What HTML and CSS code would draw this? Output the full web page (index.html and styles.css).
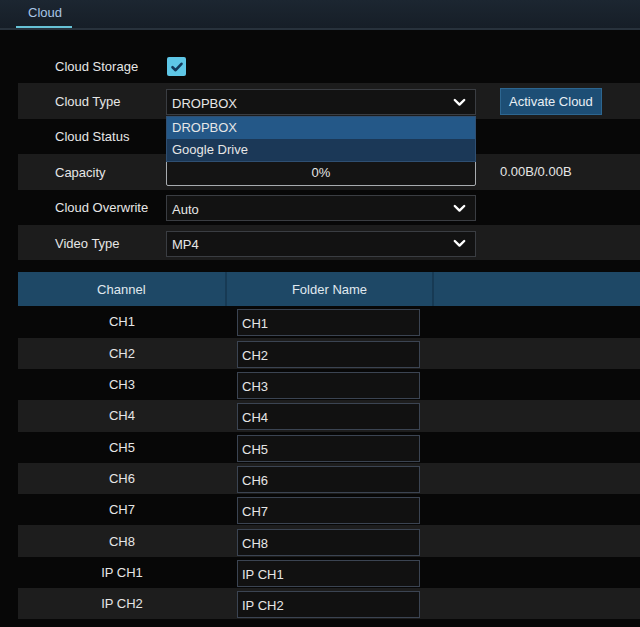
FILE: index.html
```html
<!DOCTYPE html>
<html lang="en">
<head>
  <meta charset="UTF-8">
  <meta name="viewport" content="width=device-width, initial-scale=1.0">
  <title>Cloud</title>
  <link rel="stylesheet" href="styles.css">
</head>
<body>
<div class="topbar">
  <div class="tab active">Cloud</div>
</div>

<div class="content">
  <div class="form">
    <div class="row">
      <div class="label">Cloud Storage</div>
      <div class="ctrl">
        <span class="checkbox">
          <svg width="14" height="14" viewBox="0 0 14 14"><path d="M2.5 7.2 L5.6 10.2 L11.5 3.8" fill="none" stroke="#12385a" stroke-width="2.6" stroke-linecap="round" stroke-linejoin="round"/></svg>
        </span>
      </div>
    </div>
    <div class="row">
      <div class="label">Cloud Type</div>
      <div class="ctrl">
        <div class="select open">
          <span>DROPBOX</span>
          <svg class="chev" width="13" height="9" viewBox="0 0 13 9"><path d="M1.8 2 L6.5 6.6 L11.2 2" fill="none" stroke="#fff" stroke-width="2.4" stroke-linecap="round" stroke-linejoin="round"/></svg>
          <ul class="dropdown">
            <li class="selected">DROPBOX</li>
            <li>Google Drive</li>
          </ul>
        </div>
      </div>
      <div class="extra"><button class="btn">Activate Cloud</button></div>
    </div>
    <div class="row">
      <div class="label">Cloud Status</div>
      <div class="ctrl"></div>
    </div>
    <div class="row">
      <div class="label">Capacity</div>
      <div class="ctrl">
        <div class="progress"><span>0%</span></div>
      </div>
      <div class="extra">0.00B/0.00B</div>
    </div>
    <div class="row">
      <div class="label">Cloud Overwrite</div>
      <div class="ctrl">
        <div class="select">
          <span>Auto</span>
          <svg class="chev" width="13" height="9" viewBox="0 0 13 9"><path d="M1.8 2 L6.5 6.6 L11.2 2" fill="none" stroke="#fff" stroke-width="2.4" stroke-linecap="round" stroke-linejoin="round"/></svg>
        </div>
      </div>
    </div>
    <div class="row">
      <div class="label">Video Type</div>
      <div class="ctrl">
        <div class="select">
          <span>MP4</span>
          <svg class="chev" width="13" height="9" viewBox="0 0 13 9"><path d="M1.8 2 L6.5 6.6 L11.2 2" fill="none" stroke="#fff" stroke-width="2.4" stroke-linecap="round" stroke-linejoin="round"/></svg>
        </div>
      </div>
    </div>
  </div>

  <div class="channels">
    <div class="thead">
      <div class="th">Channel</div>
      <div class="th">Folder Name</div>
      <div class="th"></div>
    </div>
    <div class="tbody" id="channel-rows"></div>
  </div>
</div>

<script>
  const channels = ['CH1', 'CH2', 'CH3', 'CH4', 'CH5', 'CH6', 'CH7', 'CH8', 'IP CH1', 'IP CH2'];
  const body = document.getElementById('channel-rows');

  // One row per channel, folder defaults to the channel name
  channels.forEach((name) => {
    const row = document.createElement('div');
    row.className = 'tr';
    row.innerHTML =
      '<div class="td name">' + name + '</div>' +
      '<div class="td"><div class="folder">' + name + '</div></div>' +
      '<div class="td"></div>';
    body.appendChild(row);
  });
</script>
</body>
</html>
```

FILE: styles.css
```css
body {
  margin: 0;
  background-color: #070707;
  color: #e6e6e6;
  font-family: "Liberation Sans", Arial, sans-serif;
  font-size: 13px;
  overflow: hidden;
}

.topbar {
  height: 28px;
  background: linear-gradient(#1c2631, #161e27);
  border-bottom: 2px solid #28323c;
  padding-left: 16px;
  display: flex;
}

.tab {
  width: 56px;
  box-sizing: border-box;
  padding-left: 12px;
  line-height: 25px;
  color: #a9c6e6;
}

.tab.active {
  border-bottom: 2px solid #66c2d6;
}

.content {
  padding: 18px 0 0 18px;
}

/* settings form */

.row {
  height: 35.4px;
  display: flex;
  align-items: center;
}

.row:nth-child(even) {
  background-color: #1c1c1c;
}

.label {
  width: 148px;
  padding-left: 37px;
  box-sizing: border-box;
  padding-top: 1px;
}

.ctrl {
  width: 310px;
  display: flex;
  align-items: center;
}

.extra {
  margin-left: 24px;
}

.checkbox {
  width: 19px;
  height: 19px;
  margin-left: 1px;
  margin-top: 2px;
  border-radius: 2px;
  background-color: #5ec6e6;
  display: flex;
  align-items: center;
  justify-content: center;
}

.select {
  position: relative;
  width: 100%;
  height: 26px;
  box-sizing: border-box;
  border: 1px solid #3a3d42;
  background-color: #121212;
  display: flex;
  align-items: center;
  justify-content: space-between;
  padding: 0 9px 0 5px;
  margin-top: 2px;
}

.select span {
  padding-top: 2px;
}

.dropdown {
  position: absolute;
  left: -1px;
  right: -1px;
  top: 26px;
  margin: 0;
  padding: 0;
  list-style: none;
  background-color: #1b3857;
  border: 1px solid #2f4f72;
  z-index: 2;
}

.dropdown li {
  height: 22px;
  line-height: 22px;
  padding-left: 5px;
}

.dropdown li.selected {
  background-color: #245888;
}

.btn {
  height: 27px;
  padding: 0 8px;
  border: 1px solid #2d6690;
  background-color: #1d4e75;
  color: #e8eef4;
  font-family: inherit;
  font-size: 13px;
}

.progress {
  width: 100%;
  height: 26px;
  box-sizing: border-box;
  border: 1px solid #a8acb0;
  border-radius: 2px;
  background-color: #141414;
  display: flex;
  align-items: center;
  justify-content: center;
  margin-top: 2px;
}

/* channel table */

.channels {
  margin-top: 12px;
}

.thead {
  display: flex;
  height: 34px;
  background-color: #1e4866;
}

.th {
  width: 207px;
  display: flex;
  align-items: center;
  justify-content: center;
  border-right: 2px solid #173a54;
  color: #e0e8ef;
}

.th:first-child {
  width: 208px;
}

.th:last-child {
  border-right: none;
}

.tr {
  display: flex;
  height: 31.3px;
}

.tr:nth-child(even) {
  background-color: #1d1d1d;
}

.td {
  width: 207px;
  display: flex;
  align-items: center;
}

.td.name {
  width: 208px;
  justify-content: center;
}

.folder {
  width: 183px;
  height: 27px;
  box-sizing: border-box;
  margin-left: 11px;
  margin-top: 2px;
  border: 1px solid #3b4452;
  background-color: #111;
  display: flex;
  align-items: center;
  padding: 2px 0 0 4px;
}
```
